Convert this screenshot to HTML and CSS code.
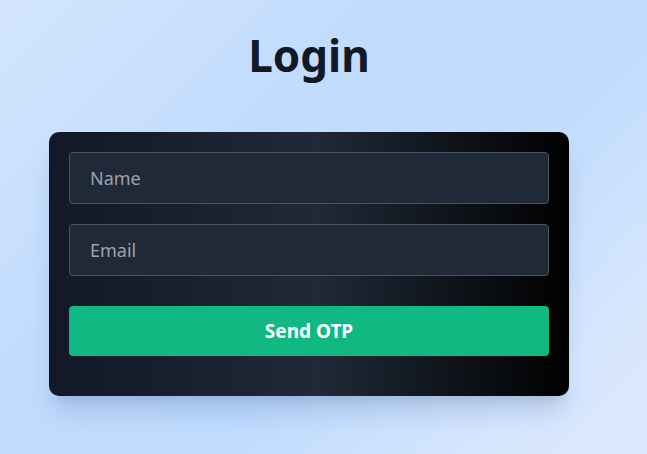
FILE: index.html
```html
<!DOCTYPE html>
<html lang="en">
<head>
<meta charset="utf-8">
<title>Login</title>
<link rel="stylesheet" href="styles.css">
</head>
<body>
<main class="page">
  <h1 class="title">Login</h1>
  <form class="card">
    <input class="field" type="text" placeholder="Name">
    <input class="field" type="email" placeholder="Email">
    <button class="btn" type="button">Send OTP</button>
  </form>
</main>
</body>
</html>
```
FILE: styles.css
```css
* { box-sizing: border-box; }
html, body { margin: 0; height: 100%; }
body {
  font-family: "Noto Sans", "Open Sans", sans-serif;
  background: linear-gradient(135deg, #d3e5fe 0%, #c2dcfd 35%, #bfdbfe 60%, #d6e6fd 85%, #dce9fd 100%);
  overflow: hidden;
}
.page {
  width: 618px;
  display: flex;
  flex-direction: column;
  align-items: center;
  padding-top: 27px;
}
.title {
  margin: 0;
  font-size: 44px;
  line-height: 56px;
  font-weight: 700;
  color: #111827;
}
.card {
  margin-top: 49px;
  width: 520px;
  padding: 20px 20px 40px;
  border-radius: 10px;
  background: linear-gradient(to right, #111827 0%, #1f2937 52%, #000000 100%);
  box-shadow: 0 20px 25px -5px rgba(30, 64, 120, 0.18), 0 8px 10px -6px rgba(30, 64, 120, 0.12);
  display: flex;
  flex-direction: column;
}
.field {
  height: 52px;
  margin-bottom: 20px;
  padding: 0 20px;
  border: 1px solid #4b5563;
  border-radius: 4px;
  background: #1f2937;
  color: #e5e7eb;
  font-family: inherit;
  font-size: 18px;
  outline: none;
}
.field::placeholder { color: #9ca3af; }
.btn {
  margin-top: 10px;
  height: 50px;
  border: none;
  border-radius: 4px;
  background: #10b981;
  color: #ffffff;
  font-family: inherit;
  font-size: 19px;
  font-weight: 700;
  cursor: pointer;
}
```
